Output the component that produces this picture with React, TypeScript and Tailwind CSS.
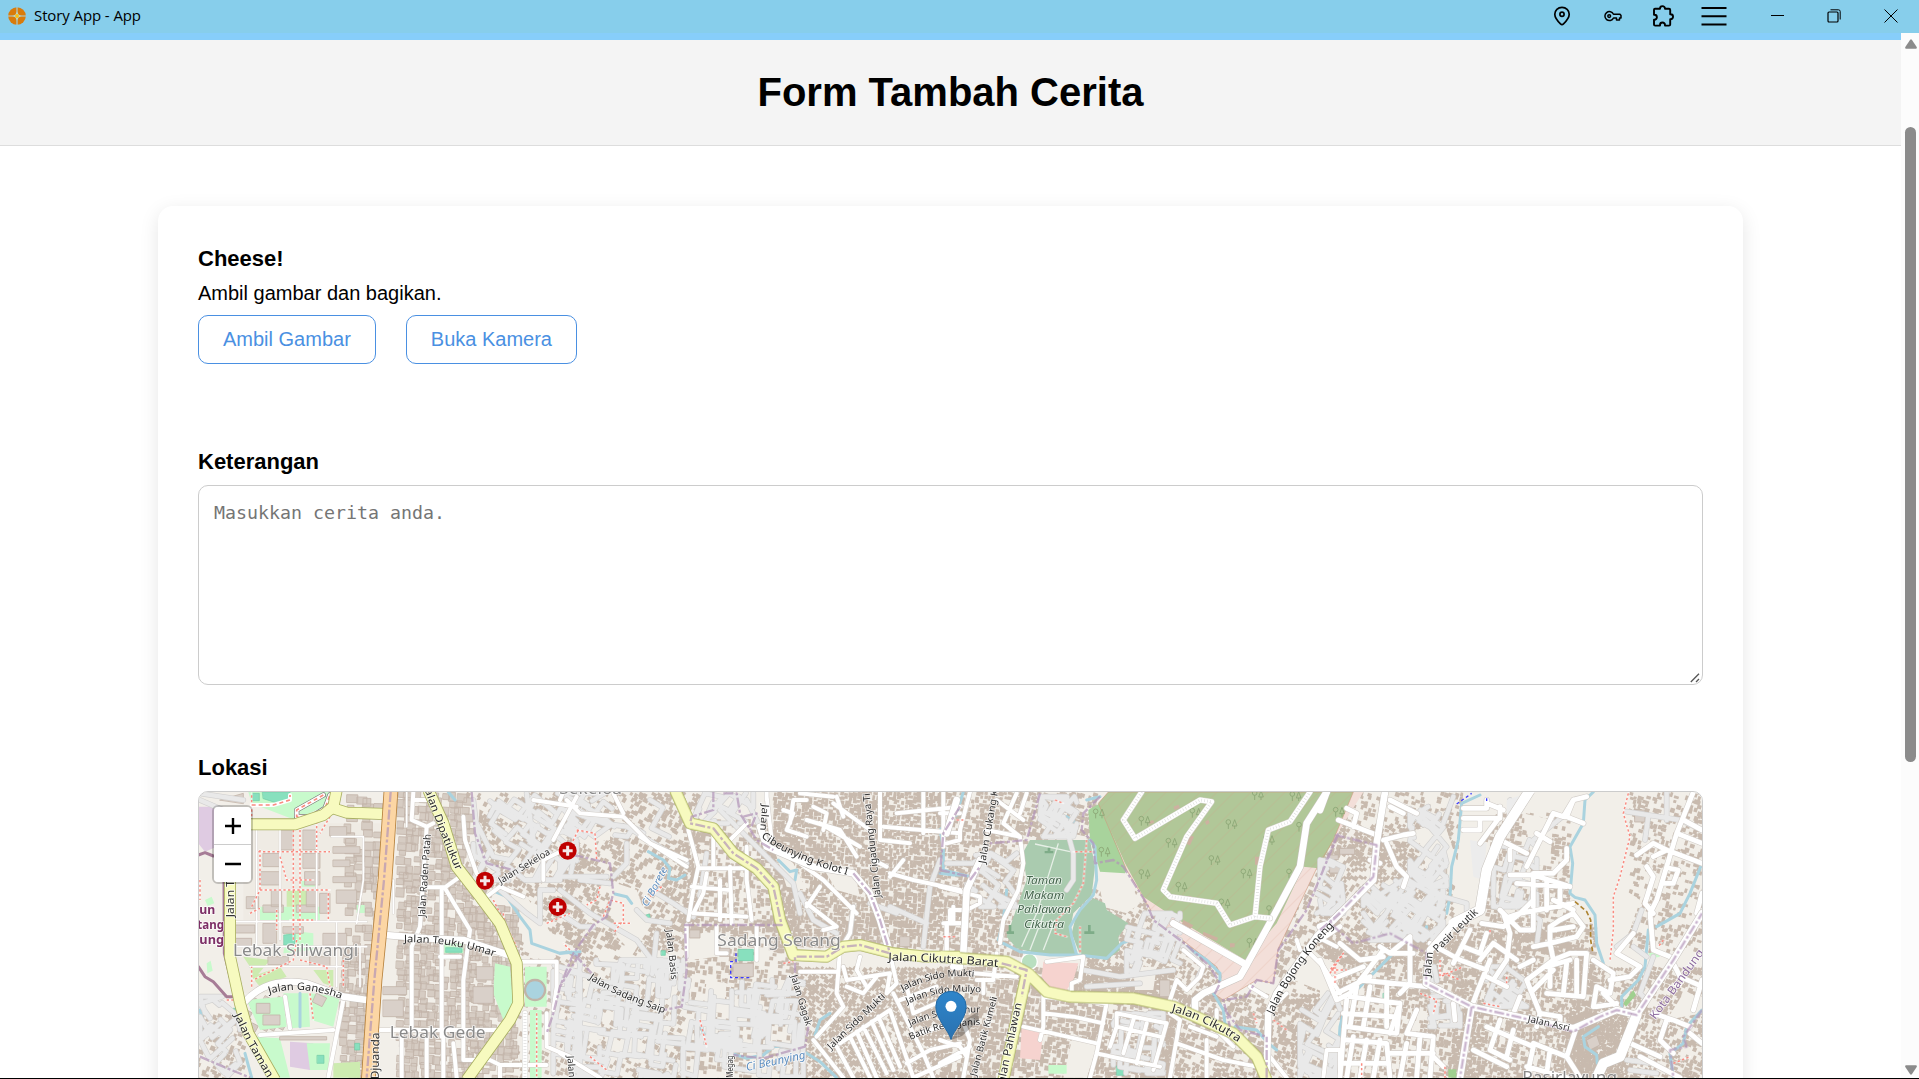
import React from "react";

const SANS = "font-['Liberation_Sans',Arial,sans-serif]";

/* ---------- map helpers ---------- */

type Seg = [number, string];

const ORIGIN = [180, 560, 940, 1320];

function rng(seed: number) {
  let s = seed;
  return () => {
    s = (s * 1664525 + 1013904223) % 4294967296;
    return s / 4294967296;
  };
}

const f1 = (n: number) => n.toFixed(1);

function houses(seed: number, x: number, y: number, w: number, h: number, step: number, density: number, angle: number) {
  const r = rng(seed);
  let d = "";
  const c = Math.cos(angle);
  const s = Math.sin(angle);
  for (let yy = y; yy < y + h; yy += step) {
    for (let xx = x; xx < x + w; xx += step) {
      if (r() > density) continue;
      const bw = step * (0.65 + r() * 0.6);
      const bh = step * (0.65 + r() * 0.6);
      const px = xx + (r() - 0.5) * step * 0.5;
      const py = yy + (r() - 0.5) * step * 0.5;
      d += `M${f1(px)} ${f1(py)}l${f1(bw * c)} ${f1(bw * s)}l${f1(-bh * s)} ${f1(bh * c)}l${f1(-bw * c)} ${f1(-bw * s)}z`;
    }
  }
  return d;
}

function alleys(seed: number, x: number, y: number, w: number, h: number, n: number, angle: number) {
  const r = rng(seed);
  let d = "";
  for (let i = 0; i < n; i++) {
    let px = x + r() * w;
    let py = y + r() * h;
    d += `M${f1(px)} ${f1(py)}`;
    let turn = r() > 0.5 ? 1 : 0;
    for (let k = 0; k < 3; k++) {
      const a = angle + turn * 1.5708 + (r() - 0.5) * 0.25;
      const len = (30 + r() * 70) * (r() > 0.4 ? 1 : -1);
      px = Math.min(x + w, Math.max(x, px + Math.cos(a) * len));
      py = Math.min(y + h, Math.max(y, py + Math.sin(a) * len));
      d += `L${f1(px)} ${f1(py)}`;
      turn = 1 - turn;
    }
  }
  return d;
}

function Layer({
  items,
  stroke = "none",
  width = 0,
  fill = "none",
  dash,
  cap = "round",
  opacity,
}: {
  items: Seg[];
  stroke?: string;
  width?: number;
  fill?: string;
  dash?: string;
  cap?: "round" | "butt";
  opacity?: number;
}) {
  return (
    <g fill={fill} stroke={stroke} strokeWidth={width} strokeDasharray={dash} strokeLinecap={cap} strokeLinejoin="round" opacity={opacity}>
      {items.map(([t, d], i) => (
        <path key={i} d={d} transform={`translate(${ORIGIN[t]} 780) scale(.33333)`} />
      ))}
    </g>
  );
}

/* ---------- map data ---------- */

const HOUSES: Seg[] = [
  [0, houses(3, 860, 36, 340, 420, 13, 0.5, 0.5)],
  [0, houses(4, 1000, 440, 160, 450, 12, 0.3, 0.4)],
  [0, houses(5, 55, 700, 140, 200, 12, 0.5, 0.4)],
  [1, houses(6, 20, 36, 400, 460, 13, 0.55, 0.5)],
  [1, houses(7, 370, 120, 330, 330, 13, 0.62, 0.1)],
  [1, houses(8, 640, 36, 500, 460, 12, 0.95, 0.15)],
  [1, houses(9, 20, 430, 360, 470, 12, 0.34, 0.5)],
  [1, houses(10, 380, 440, 330, 460, 13, 0.42, 0.1)],
  [1, houses(11, 700, 560, 460, 340, 12, 0.88, 0.6)],
  [2, houses(12, 0, 36, 250, 490, 12, 0.78, 0.2)],
  [2, houses(13, 230, 36, 240, 150, 12, 0.7, 0.3)],
  [2, houses(14, 0, 560, 700, 340, 13, 0.84, 0.15)],
  [2, houses(15, 420, 330, 420, 330, 12, 0.6, 0.5)],
  [2, houses(16, 640, 640, 500, 260, 13, 0.72, 0.4)],
  [2, houses(17, 1010, 160, 190, 500, 12, 0.5, 0.4)],
  [3, houses(18, 0, 130, 400, 420, 12, 0.66, 0.6)],
  [3, houses(19, 50, 36, 400, 200, 12, 0.38, 0.3)],
  [3, houses(20, 0, 480, 460, 420, 12, 0.66, 0.2)],
  [3, houses(21, 500, 100, 250, 420, 12, 0.62, 0.2)],
  [3, houses(22, 400, 430, 430, 470, 12, 0.8, 0.25)],
  [3, houses(23, 750, 560, 400, 340, 12, 0.72, 0.4)],
  [3, houses(24, 930, 36, 220, 480, 12, 0.45, 0.3)],
  [3, houses(25, 740, 700, 180, 190, 11, 0.98, 0.4)],
];

const BLOCKS: Seg[] = [
  [0, houses(1, 655, 36, 200, 860, 22, 0.92, 0.05)],
  [0, houses(2, 850, 380, 150, 520, 21, 0.9, 0.05)],
  [0, houses(51, 485, 500, 90, 400, 23, 0.85, 0.05)],
  [0, houses(52, 500, 50, 100, 450, 26, 0.75, 0.02)],
  [0, houses(53, 200, 650, 110, 100, 20, 0.6, 0.5)],
];

const OPEN: Seg[] = [
  [3, "M800 36H920L880 90L930 170L915 330L960 360L930 450L880 540L845 520L825 400L760 345L750 210L790 130Z"],
  [3, "M210 180L370 120L410 240L390 330L330 300L300 190Z"],
  [3, "M430 36H560L490 180L460 360L400 380L420 160Z"],
  [3, "M0 530L70 560L20 700L0 700ZM0 720L60 720V790H0Z"],
  [3, "M610 100L700 120L690 250L640 260Z"],
  [3, "M1090 640L1146 650V700L1040 720Z"],
  [2, "M470 270L560 285L600 370L560 400L490 380Z"],
  [2, "M580 560L650 560L640 630L585 630ZM1110 500L1180 560L1160 640L1060 600Z"],
  [2, "M400 760L470 800L440 893H370ZM350 150L440 170V180H350Z"],
  [1, "M640 200L700 250L740 330L680 320ZM780 250L880 260L900 350L830 330Z"],
  [1, "M20 120L150 150V180L60 190ZM140 300L230 330L270 440L220 520L170 470ZM20 700L120 710L130 780L30 770Z"],
  [1, "M370 460L470 460V530L390 540ZM440 600L500 610L490 700L430 690Z"],
  [0, "M850 60L900 60L890 240L850 200ZM930 340L1040 350L1120 470L1180 500L1100 540L1020 480Z"],
  [0, "M55 210L130 240V380L55 300ZM60 500L130 560L150 650L90 600Z"],
];

const BIG: Seg[] = [
  [0, "M300 150h40v60h-40zM370 150h40v60h-40zM250 220h50v40h-50zM370 220h50v45h-50zM240 275h60v40h-60zM375 275h45v40h-45zM450 140h50v28h-50zM460 200h80v20h-80zM460 290h70v18h-70zM275 330h30v50h-30zM380 330h30v50h-30zM420 340h30v60h-30zM200 350h36v36h-36zM250 375h60v22h-60zM350 375h60v22h-60zM165 435h60v24h-60zM165 475h50v24h-50zM250 430h40v60h-40zM430 460h70v36h-70zM310 440h60v20h-60zM470 330h60v40h-60zM460 240h50v20h-50zM265 530h60v24h-60zM390 530h60v30h-60zM410 640l30 14l-14 26l-28-14z"],
  [0, "M230 670h40v30h-40zM250 705h50v30h-50zM610 620h70v24h-70zM610 660h60v50h-60zM890 560h50v40h-50zM880 620h60v50h-60zM300 770h140v10h-140zM120 60l70-20v30z"],
  [2, "M660 600h30v50h-30zM950 560l30 -50l15 10l-30 50zM340 590h30v24h-30zM365 560h20v20h-20zM1170 250h30v30h-30z"],
  [3, "M800 780l30-15l10 30l-30 15zM30 255h40v24h-40zM60 205h44v18h-44zM25 225h30v14h-30zM945 90h30v36h-30zM340 245h40v40h-40z"],
  [1, "M480 505h30v24h-30zM1020 470h30v30h-30zM520 550h60v40h-60zM390 450h30v24h-30z"],
];

const PARK: Seg[] = [
  [0, "M205 36H455L430 80L345 120L215 70ZM310 640L385 640L390 740L330 745ZM200 660L310 650L320 740L240 750ZM390 640L480 650L460 740L395 720ZM320 450L400 460V510L310 520ZM240 380H420V420H240ZM1035 560L1100 560V680L1035 680ZM945 550L990 560L1000 680L970 720L940 640ZM230 770L300 775L330 893H290ZM1050 690H1085V893H1050ZM380 790L450 790L445 870L390 870ZM790 490L850 490V520H790ZM75 360l20-10l8 20l-20 8zM365 300h40v20h-40zM80 550l12-8l6 30l-16 8zM530 375l24 0v24h-24z"],
  [3, "M985 520L1010 515L1020 530L995 535Z"],
  [2, "M325 855h55v26h-55z"],
];

const GRASS: Seg[] = [
  [0, "M190 530L270 540L220 600L210 560ZM400 570L460 570V620L430 610ZM215 590L300 560L320 590L240 620ZM460 850L540 845V893H460ZM320 330h60v50h-60zM465 292h60v12h-60z"],
];

const PITCH: Seg[] = [
  [0, "M248 36H330V60L300 72L250 56ZM312 465l33-3v30l-33 3zM798 503h48v14h-48zM412 826h20v24h-20zM525 790h14v20h-14zM218 40h20v22h-20zM160 685h10v16h-10z"],
  [1, "M535 508h45v34h-45zM258 405l10-3l4 18l-10 3zM304 512h12v14h-12z"],
  [2, "M530 858h26v28h-26zM875 576l20-4v16l-20 4z"],
  [3, "M190 640h14v16h-14z"],
];

const WATER: Seg[] = [
  [1, "M265 215L310 240L330 265L325 295L350 300L375 285M165 342L200 350L215 370M0 520L30 515L50 525M655 240L690 275L710 270L705 300M415 710L430 760L450 780L470 765M515 820L560 835L610 825L640 800L700 795L740 820L780 845L830 893M810 700L780 720L765 765M1200 100L1180 110M1140 280L1180 285H1200"],
  [2, "M70 36L50 100L0 150L10 200V270L90 290M200 330L190 420L175 480M190 490L240 515L330 525L410 525L395 470L390 440L420 390L460 345L470 300L465 200L450 180M415 525L500 535L545 490L570 480M380 110L410 130M740 500L800 540L840 580V610L820 640L850 690L855 730L880 760M885 740L950 750L985 790L1010 810M1190 780V893M440 60L480 50"],
  [0, "M805 36L825 60M60 690L70 730L55 760M945 335L980 350L1020 410L1050 450L1055 490L1140 520L1200 515M195 820L215 893M360 640V740"],
  [3, "M480 45L425 70L415 180L395 260L390 350L380 400M320 440L310 470M250 490L210 530L140 600L80 660L60 740L50 893M820 36L795 60L790 130L750 200L758 250L750 340L765 352L795 360L825 405L830 490L850 550M1146 250L1110 340L1080 400L1010 440M985 450L975 560L955 600L905 650V690M835 740L790 770L795 800L830 825L832 850M1146 690L1100 740L1090 790L1050 820L1060 893"],
];

const ALLEYS: Seg[] = [
  [0, alleys(31, 880, 40, 310, 260, 20, 0.6) + alleys(32, 1120, 520, 80, 370, 16, 0.2) + alleys(33, 60, 650, 120, 240, 9, 0.8) + "M60 60L130 90M60 40L190 60"],
  [0, "M890 130L940 230L990 240M880 60L900 230M980 80L1100 160L1190 150M1040 40L1060 180L1150 250M960 330L1040 400L1080 430V330H1120M1040 300H1140V250"],
  [1, alleys(34, 20, 540, 350, 350, 44, 0.12) + alleys(35, 370, 600, 360, 290, 36, 0.1) + alleys(36, 20, 40, 320, 130, 10, 0.6) + alleys(37, 400, 40, 180, 90, 7, 2.1)],
  [1, "M20 90L130 130L200 140L380 250M0 330L90 400L230 480L290 560M60 300L150 310M200 190V250L160 290M230 390L260 420L330 430M0 400L60 440L100 440M0 290H140M480 90L560 170L700 310L720 400M560 60L620 180M290 340L340 370L400 410M290 460L280 560L320 640M440 220L420 350M990 380L1100 430M720 340L760 420L830 460M930 370L1010 400M880 380L870 460L840 510M1090 500L1110 320L1140 240"],
  [2, alleys(38, 300, 50, 110, 120, 9, 0.5) + alleys(39, 560, 400, 160, 180, 12, 0.3) + alleys(40, 1080, 640, 120, 250, 16, 0.5) + alleys(41, 520, 700, 150, 180, 12, 0.15) + alleys(44, 80, 220, 150, 160, 8, 0.6)],
  [2, "M430 570L540 590L700 570M440 620L600 610M370 110L400 220V300L380 330M20 250H100M730 500L790 560L770 600M1130 340L1180 370L1130 400"],
  [3, alleys(42, 130, 300, 240, 180, 26, 2.2) + alleys(43, 270, 80, 110, 240, 12, 0.6) + alleys(45, 500, 560, 120, 120, 8, 0.6) + alleys(46, 520, 180, 130, 200, 12, 0.3) + alleys(47, 0, 240, 70, 160, 8, 0.6) + alleys(48, 330, 560, 90, 180, 8, 1.5)],
  [3, "M920 95L1080 120L1146 150M1040 36V120M985 110L975 180M400 50L370 130M640 180L740 100M570 60L590 90M1000 530L960 640L980 660M965 390L940 460L890 500M940 500L980 530M370 350L440 370V400M630 400L660 420L650 500M920 840L1000 850M930 870L1010 880"],
];

const WHITE_THIN: Seg[] = [
  [0, "M455 170H550V300L530 430M160 425H560M160 500H560M230 140V500M300 140V480M410 150V420M470 430V620M210 560H490M540 500V620M640 400V300H610M680 36V140"],
];

const WHITE: Seg[] = [
  [0, "M700 36L695 120L740 140L760 130M740 140L720 440L695 500V740M785 330V770M795 325L870 450L850 600V840H930M735 322L795 322L840 290M850 110L855 180L890 280L920 320M1010 545H1130V620L1120 690M960 855H1100M1100 700V800L1170 830M600 750H960M665 760V893M740 770V893M790 770V893M820 790L830 893M930 840L960 855V893M240 765L460 750M490 660L445 893M315 650L330 745M840 530H780M700 60H740M1060 60L1190 80M1120 180L1190 50M1090 300V240L1170 200M920 350L960 320L1030 350"],
  [1, "M20 60L60 100L190 110L270 190L380 240M160 40L190 100M240 170L380 260M385 150L415 260L400 330L385 420M420 265H560M460 160V260M510 260L515 430M560 200V300L575 420M440 280L430 340L400 400L560 410M480 300V420M395 320L510 330M380 435V530M470 440V520H500M590 440V540M620 50L635 180M620 36V60M670 90L700 100L680 150L740 170M740 60L700 60L690 130M760 80L800 100L790 150M820 70L930 150M780 130L900 200M830 50L850 110M720 40L820 50M740 120L840 150L890 230M720 250L790 300L850 360L890 400M740 370L830 440L790 450M780 320L740 380M560 130L500 190M880 380L870 460L840 510L830 640L850 680L770 770M850 560L860 600L990 580L980 640M720 575H835M860 620L910 640L950 590M890 570L920 620M900 530L890 570M990 280L1060 300L1200 330M1030 240L990 290M960 30V180L1050 190M1010 100L1200 80M970 140L1200 160M1090 36V160M940 240L980 260M1150 36V200M1160 430V540M1150 430H1200M1180 380V430M990 520L1010 610L980 640M0 820L120 893M20 10L0 60"],
  [1, "M840 790L990 690L1060 893M870 770L930 893M890 755L950 893M910 740L980 880M935 725L1000 870M955 710L1020 860M830 800L880 893M760 780L850 893M1000 640L1090 820L1120 893M1040 850L1110 810L1200 790M1060 893L1200 830M1020 660L1130 620M1060 700L1150 660M1080 760L1200 720M1040 620L1060 700"],
  [2, "M90 36L60 150V180L20 190M170 60L250 120M230 40L190 130L240 170L250 250L235 330L190 420L180 490M140 150L240 170M260 40L240 100M0 320L80 340L120 350V370L80 390M70 390H30V430M70 430H20V520M170 520L160 600L110 600M0 100H60M100 580L230 590M130 600V640M310 620V740L300 780M310 650L500 670L470 820L450 893M310 700L400 710L490 730M250 740L470 790M470 820L560 840L660 860M710 600L690 660V700L720 720L690 893M710 600L740 630L780 590L790 560L730 510M430 530L420 600L395 610V640M320 545L430 530M530 700V740L510 800M530 700L680 730L640 870M580 720L550 820M620 730L590 850M530 740L660 770M710 790L850 840L950 860M750 740L830 770M830 690V750L880 800M0 780L60 800L80 830M60 700L90 780L70 893M0 850L90 800M930 620L980 650M1070 480L1080 510M1100 510L1150 560L1200 640M1150 480L1190 500M990 830L1040 893M1150 893L1160 810H1200V893M800 780V890M1000 680L1040 640"],
];

const WHITE_EAST: Seg[] = [
  [3, "M55 120L170 165M80 85L110 100L100 140M210 60L290 100M210 80L250 100M190 180L250 165L280 160M200 190L230 260L260 290L250 320M180 250L150 240M430 85H500V60M430 115H540V80M430 150H480V120M540 110L480 190M500 70L550 90M540 180L620 220M570 210V240M620 260L700 100L730 110L760 60L800 50M760 60L740 110L790 130M650 160L690 185M640 280L700 280L740 240V205M570 285H640L750 320M590 310L740 320M640 290V380M680 300V390M720 330V380M760 370L600 400L570 410M700 360L760 390M550 400L570 460L560 540L520 600M485 430L550 440L600 400L640 360M540 390L600 450L640 450V400M690 440L720 420L760 400L790 440L770 470L690 490ZM700 450L760 440M640 500L690 490L700 540L750 520L800 520L790 650L680 640M620 600L700 540M640 630L700 570M680 560L750 540M690 620V560M730 640L740 550M770 640V540M620 600L660 700L720 710M640 540L600 560M590 540L520 490L480 540M450 450L400 550M430 500L480 520L500 460M330 490L420 540L500 570M510 540L470 640L455 680M500 590L560 620"],
  [3, "M0 480L60 440M0 540L50 660L90 640L190 510M30 600L130 560M50 640L150 590M60 490L120 540L190 530M180 500L210 520L270 470M210 520H280M270 470V610L240 640M120 600L320 620M90 650L240 670L230 760L80 740M110 620L90 740M150 620L130 740M200 620V740M70 700L220 710M80 660L60 890M80 780L200 790L210 893M100 770L80 893M140 780L120 893M180 780L160 893M70 850H200M240 670L210 760M290 690L260 760L340 770L330 893M260 790L240 893M300 770L290 893M210 820H340M340 830L370 860M400 670L405 720M460 810L560 860M500 740L640 800L620 893M540 720L510 810L570 840M580 750L560 830M640 790L740 830M660 700L650 740M720 710V740M770 740L740 830L780 893M690 810L680 880M620 860L740 893M600 650L580 700M820 540L880 580L870 640L830 620L820 680M850 640L900 690M870 600L930 590L960 560L890 520L940 460M830 680L890 670"],
  [3, "M1120 36L1070 160L1010 360L990 400L1000 510L1050 530M1000 230L1040 210L1146 250M950 225L1000 190L1040 210M980 260L1000 290L975 370L1000 400M1050 265L1075 270L1060 310H1030M1090 120L1146 150M1070 160L1146 190M1146 340L1130 400M1050 530L1080 590L1146 620M1000 700L1060 720L1110 740M1040 720L1020 780L1060 820M930 790L1020 830M1110 760L1146 790M960 830L1080 893M1146 600L1120 690"],
];

const WHITE_WIDE: Seg[] = [
  [0, "M615 465L740 475L850 480L1000 530M190 670C250 600 330 600 380 610L490 650L560 660"],
  [1, "M600 140L620 200L760 260L880 280L930 340L960 420L990 520M1190 60L1160 160M1180 560H1200"],
  [2, "M120 240L80 330L70 520M920 555L900 590L790 640L765 660V690M700 430L920 555M1200 400L1130 470L1010 640L985 700L980 893M920 555L1000 410L1080 260L1100 130L1160 36"],
  [3, "M195 36L170 190L160 300L30 430L0 440M20 36L0 90M400 430L330 510L318 610L455 680L600 712L760 745M455 680L420 893M760 745L890 690L950 705L1060 540L1146 400"],
];

const WHITE_MAIN: Seg[] = [[3, "M630 30L540 170L500 270L480 390L400 430M950 705L900 830L850 850L830 893"]];

const DOTTED_WHITE: Seg[] = [
  [2, "M605 36L550 120L585 175L780 60L815 65L740 170L670 330L690 350L830 370L870 435L945 410L990 415M945 410L960 260L985 150L1050 125L1110 36"],
  [0, "M1035 700V893"],
];

const YELLOW: Seg[] = [
  [0, "M150 290L150 530L180 670L205 760L285 900M200 133H345L430 105L460 80L470 30M460 85L500 98L615 102"],
  [0, "M745 30L790 130L830 260L900 350L960 430L1010 550L1015 670L990 720L860 900"],
  [1, "M345 30L390 130L460 145L520 220L590 265L640 320L660 420L700 525L800 530L850 500L900 495L1000 520L1100 530L1200 530"],
  [2, "M0 530L200 545L265 580L320 635L390 650L580 655L700 680L880 760L950 830L980 900M258 590L190 900"],
];

const ORANGE: Seg[] = [[0, "M633 30L615 300L585 600L565 900"]];

const BOUNDARY: Seg[] = [
  [0, "M875 36L885 160L920 250L1000 270M1200 520L1140 620L1120 700L1100 760M60 830L130 860L210 893"],
  [0, "M632 36L612 300L583 600L560 893"],
  [1, "M460 36V90L395 110L390 130L460 145L520 220L590 265L640 320L665 435H375L380 570L365 680L310 690M490 40H530L540 100L590 180L640 210M40 225L150 250L160 340L140 410L100 435L40 520L0 620M45 525L95 580M550 110L590 100L570 150M880 280L930 340L960 420L990 520L900 495L850 500L800 530H705V610M745 740L735 800L610 835L520 825M1200 80L1150 160L1140 280"],
  [2, "M300 40L260 180L150 190M480 50L430 100L425 150L460 190L465 250L520 240L550 260L620 370L640 420L740 495L810 560L840 610L820 650M185 550L260 570L245 650M1195 160L1100 390L1015 510L1000 610L950 600L920 650L850 660L870 740M90 300L120 260M0 270L90 290M980 893V770M1140 450L1200 400M855 690L900 750L980 770"],
  [3, "M45 165L170 195L160 290L30 430L100 490L210 460L320 520L318 610L455 680L600 712L760 755L840 710L890 690L950 705L1060 540L1146 400M455 680L420 893M20 240L50 170M1146 690L1090 770L1100 800L1050 810L1060 893"],
];

const FOOT: Seg[] = [
  [0, "M340 150V480M360 150V480M235 215H450M215 380L240 330H450M300 230L320 300L400 300M290 390V450M350 480L340 540L220 600M360 540L440 560L450 620M490 540V620M210 400L240 385M445 340V420M410 110V210M450 110L420 160M240 210V330M215 620V560M390 640L400 720M1070 700V893M940 360L1010 500M970 400L980 480M400 420H330M60 300V360M330 120H215V40M140 660H180M1100 430L1170 400M1160 220L1195 150"],
  [1, "M50 150L105 160L110 240M120 320L110 360L80 375M130 410L150 360L190 370V420L160 460M210 430H160M420 720L440 800M305 320L270 350M30 510L10 490M90 830L140 870M670 550L700 545"],
  [2, "M455 215H400M440 180L430 310L400 370L350 420L345 460L380 470M345 60L370 70M10 470H50M50 120H70M420 440V520M1000 720L1040 750M940 700L950 730M1185 560V610"],
  [3, "M925 40L910 100L930 170L900 290L880 350V450L870 540M30 580L70 520L30 570L80 570M360 540V590L430 560M370 580L420 600M300 640L350 660L340 700M490 670L540 680M1030 480L1015 500M1060 850L1110 830M125 850V893M375 860V893M560 590V610M510 450V460"],
];

function Tree({ x, y }: { x: number; y: number }) {
  return (
    <g transform={`translate(${x} ${y})`} fill="none" stroke="#8ba675" strokeWidth="2.6">
      <circle cx="-8" cy="-6" r="7" />
      <path d="M-8 1V15M11 15V6M11 -13L4 6H18Z" />
    </g>
  );
}

interface LabelProps {
  t: number;
  x: number;
  y: number;
  r?: number;
  w: number;
  s?: number;
  c?: string;
  b?: boolean;
  i?: boolean;
  a?: "start" | "middle";
  children: string;
}

function Label({ t, x, y, r = 0, w, s = 31, c = "#333", b, i, a = "middle", children }: LabelProps) {
  return (
    <g transform={`translate(${ORIGIN[t]} 780) scale(.33333)`}>
      <text
        transform={`translate(${x} ${y}) rotate(${r})`}
        textAnchor={a}
        textLength={w}
        lengthAdjust="spacingAndGlyphs"
        fontSize={s}
        fontWeight={b ? 700 : 400}
        fontStyle={i ? "italic" : "normal"}
        fill={c}
        stroke="rgba(255,255,255,.75)"
        strokeWidth="5"
        strokeLinejoin="round"
        paintOrder="stroke"
      >
        {children}
      </text>
    </g>
  );
}

function CurvedLabel({ id, t, d, w, s = 31, children }: { id: string; t: number; d: string; w: number; s?: number; children: string }) {
  return (
    <g transform={`translate(${ORIGIN[t]} 780) scale(.33333)`}>
      <path id={id} d={d} fill="none" />
      <text fontSize={s} fill="#2b2b2b" stroke="rgba(255,255,255,.6)" strokeWidth="4" paintOrder="stroke" textLength={w} lengthAdjust="spacingAndGlyphs">
        <textPath href={`#${id}`}>{children}</textPath>
      </text>
    </g>
  );
}

function MapCanvas() {
  return (
    <svg viewBox="199 792 1503 287" className="block h-[287px] w-[1503px] font-['Noto_Sans',sans-serif]">
      <defs>
        <pattern id="hatch" width="36" height="36" patternUnits="userSpaceOnUse" patternTransform="rotate(45)">
          <path d="M0 0V36" stroke="#d99a86" strokeWidth="3" opacity=".55" />
        </pattern>
        <linearGradient id="pin" x1="0" y1="0" x2="0" y2="1">
          <stop offset="0" stopColor="#2e85cb" />
          <stop offset="1" stopColor="#2a72b0" />
        </linearGradient>
      </defs>
      <rect x="199" y="792" width="1503" height="287" fill="#f2efe9" />
      <Layer items={HOUSES} fill="#c8baae" />
      <Layer items={OPEN} fill="#f2efe9" />
      <Layer items={[[0, "M190 130H600V420H190ZM150 420H580V640H190Z"]]} fill="#efebe4" />
      <Layer items={BLOCKS} fill="#d6ccc3" stroke="#c3b5a9" width={2.5} />
      <Layer items={[[0, "M55 80H130L110 200L75 215L55 190ZM330 785L400 790L390 870L330 860Z"]]} fill="#dfcbe2" />
      <Layer items={PARK} fill="#c8facc" />
      <Layer items={GRASS} fill="#cdebb0" />
      <Layer items={PITCH} fill="#88e0be" stroke="#6fcaa6" width={2} />
      <Layer items={BIG} fill="#d9d0c9" stroke="#c3b5aa" width={2.5} />

      {/* cemetery and pink blocks */}
      <Layer
        items={[[2, "M270 180H450L465 260L455 345L400 400L390 450L410 525L310 525L230 505L200 470L235 370L260 300L248 220ZM460 355L495 370L500 390L565 430L535 470L540 510L500 540L420 525L395 460L410 400Z"]]}
        fill="#aacbaf"
      />
      <Layer items={[[2, "M310 545L415 550L400 600L380 630L330 625L305 590ZM245 745L310 755L300 840L240 835Z"]]} fill="#f6d3cf" />
      <g transform="translate(940 780) scale(.33333)">
        <path d="M505 36H1270L1180 180L1130 265L1015 505L1000 610L950 600L850 660L820 640L845 590L830 560L650 420L560 270L475 70Z" fill="#f3dfd9" />
        <path d="M445 90L480 70L560 270L555 280L480 275L470 240L450 180Z" fill="#a8d39c" />
        <path d="M505 36H1240L1180 180L1135 265L1090 260L1010 430L915 540L700 410L610 350L555 250L475 70Z" fill="#b1c798" />
        <path d="M505 36H1240L1180 180L1130 265L1015 505L1000 610L950 600L850 660L820 640L845 590L830 560L650 420L560 270L475 70Z" fill="url(#hatch)" stroke="#d09a80" strokeWidth="3" opacity=".6" />
        <path d="M700 80l16-6l4 10l-16 6zM625 125l14-5l4 8l-14 5zM750 165l12 5l-12 26l-10-4zM795 125l10-6l4 10l-10 6zM945 230h12v24h-12zM730 420l30 16l-8 10l-26-14zM790 455l44 18l-4 10l-42-18zM870 490h14v12h-14zM710 348h44v6h-44z" fill="#cdb1a0" />
        {[
          [475, 100], [612, 122], [693, 188], [765, 98], [873, 132], [952, 45], [822, 240], [918, 280], [723, 320],
          [612, 282], [852, 370], [936, 488], [492, 215], [1065, 48], [1085, 140], [1055, 280], [985, 180], [995, 390], [1195, 95],
        ].map(([x, y]) => (
          <Tree key={`${x}-${y}`} x={x} y={y} />
        ))}
        <path d="M285 192L390 215M355 190L290 400L245 500M320 380L270 510M345 420L310 510" stroke="#e6efe6" strokeWidth="4" fill="none" />
        <path d="M325 205v10h-9v3h22v-3h-9v-10zM446 437v19h-11v4h26v-4h-11v-19zM208 437v19h-6v4h18v-4h-8v-19z" fill="#7eac88" stroke="#7eac88" strokeWidth="4" />
        <circle cx="268" cy="545" r="24" fill="#b9dfc0" stroke="#fff" strokeWidth="4" />
      </g>

      <Layer items={WATER} stroke="#aad3df" width={9} />
      <Layer items={ALLEYS} stroke="#d2d1d0" width={17} />
      <Layer items={ALLEYS} stroke="#e9e9e9" width={13} />
      <Layer items={[[3, "M450 180L500 190L490 300L460 290ZM560 60L620 40L600 90L560 130Z"]]} fill="#ececec" />
      <Layer items={WHITE_THIN} stroke="#cfc9c4" width={7} />
      <Layer items={WHITE_THIN} stroke="#ffffff" width={5} />
      <Layer items={WHITE} stroke="#d2cdc8" width={15} />
      <Layer items={WHITE_EAST} stroke="#d2cdc8" width={18} />
      <Layer items={WHITE} stroke="#ffffff" width={12} />
      <Layer items={WHITE_EAST} stroke="#ffffff" width={14.5} />
      <Layer items={WHITE_WIDE} stroke="#c9c4bf" width={23} />
      <Layer items={WHITE_WIDE} stroke="#ffffff" width={20} />
      <Layer items={WHITE_MAIN} stroke="#c9c4bf" width={33} cap="butt" />
      <Layer items={WHITE_MAIN} stroke="#ffffff" width={30} />
      <Layer items={DOTTED_WHITE} stroke="#d5d3cd" width={18} />
      <Layer items={DOTTED_WHITE} stroke="#ffffff" width={15} />
      <Layer items={DOTTED_WHITE} stroke="#dedede" width={9} dash="2 7" cap="butt" />
      <Layer items={FOOT} stroke="#fff" width={6} opacity={0.6} />
      <Layer items={FOOT} stroke="#f98b80" width={4.5} dash="7 7" cap="butt" />
      <Layer items={[[0, "M430 45L350 90L350 110L395 110L435 85L450 45"]]} stroke="#777" width={16} />
      <Layer items={[[0, "M430 45L350 90L350 110L395 110L435 85L450 45M215 75L280 75L330 60V45"]]} stroke="#fff" width={12} />
      <Layer items={[[0, "M430 45L350 90L350 110L395 110L435 85L450 45M215 75L280 75L330 60V45"]]} stroke="#f98b80" width={5} dash="12 9" cap="butt" />
      <Layer items={[[0, "M132 300L133 520L165 650L140 650L100 605L75 590L55 560M55 225L75 218L100 228"]]} stroke="#a67c96" width={9} />
      <Layer items={YELLOW} stroke="#a9af62" width={36} cap="butt" />
      <Layer items={YELLOW} stroke="#f7fabf" width={31} cap="butt" />
      <Layer items={ORANGE} stroke="#b5803c" width={44} cap="butt" />
      <Layer items={ORANGE} stroke="#fcd6a4" width={39} cap="butt" />
      <Layer items={BOUNDARY} stroke="#b294b8" width={7} dash="30 7 9 7" cap="butt" opacity={0.7} />
      <Layer items={[[3, "M765 365L800 395L812 420V480L818 515"]]} stroke="#ad8330" width={5} dash="14 8" cap="butt" />
      <Layer items={[[1, "M528 520V545H512V593H575"], [3, "M410 72L455 40M500 55v8"]]} stroke="#3a3aff" width={4} dash="9 8" cap="butt" />
      <Layer items={[[0, "M1065 600a30 30 0 1 0 .1 0z"]]} fill="#aad3df" stroke="#c0b4a8" width={7} />
      <Layer items={[[3, "M910 670L940 630L948 645L918 680Z"], [3, "M385 868h24v25h-24z"]]} fill="#a0d08f" />

      {/* labels */}
      <Label t={0} x={347} y={529} w={376} s={47} c="#8a8a8a">Lebak Siliwangi</Label>
      <Label t={0} x={773} y={773} w={288} s={47} c="#8a8a8a">Lebak Gede</Label>
      <Label t={1} x={657} y={499} w={370} s={47} c="#8a8a8a">Sadang Serang</Label>
      <Label t={1} x={92} y={42} w={188} s={47} c="#8a8a8a">Sekeloa</Label>
      <Label t={3} x={749} y={909} w={284} s={47} c="#8a8a8a">Pasirlayung</Label>
      <Label t={0} x={58} y={401} w={48} s={36} c="#7d2f66" b a="start">un</Label>
      <Label t={0} x={52} y={446} w={80} s={36} c="#7d2f66" b a="start">tang</Label>
      <Label t={0} x={58} y={491} w={74} s={36} c="#7d2f66" b a="start">ung</Label>
      <CurvedLabel id="ganesha" t={0} d="M268 642C330 622 400 625 500 662" w={220}>Jalan Ganesha</CurvedLabel>
      <CurvedLabel id="teuku" t={0} d="M672 487C760 486 850 496 960 536" w={276}>Jalan Teuku Umar</CurvedLabel>
      <CurvedLabel id="dipati" t={0} d="M734 30Q790 190 850 320" w={260} s={32}>alan Dipatiukur</CurvedLabel>
      <CurvedLabel id="taman" t={0} d="M162 705L205 795L262 893L290 940" w={215} s={32}>Jalan Taman</CurvedLabel>
      <Label t={0} x={162} y={412} r={-90} w={112} s={32} a="start">Jalan T</Label>
      <Label t={0} x={735} y={412} r={-86} w={250} s={30} a="start">Jalan Raden Patah</Label>
      <Label t={0} x={596} y={898} r={-89} w={140} s={34} a="start">Djuanda</Label>
      <Label t={0} x={962} y={312} r={-31} w={176} s={29} a="start">Jalan Sekeloa</Label>
      <Label t={1} x={22} y={828} r={86} w={90} s={29} a="start">Jalan K</Label>
      <Label t={1} x={318} y={450} r={84} w={150} s={29} a="start">Jalan Basis</Label>
      <CurvedLabel id="saip" t={1} d="M86 596C150 640 230 670 330 706" w={250} s={29}>Jalan Sadang Saip</CurvedLabel>
      <Label t={1} x={262} y={382} r={-62} w={130} s={30} c="#5d8ec0" i a="start">Ci Borete</Label>
      <Label t={1} x={560} y={873} r={-12} w={182} s={34} c="#5d8ec0" i a="start">Ci Beunying</Label>
      <Label t={1} x={607} y={72} r={95} w={80} s={30} a="start">Jalan</Label>
      <CurvedLabel id="cibeu" t={1} d="M603 172Q700 245 890 292" w={284} s={31}>Cibeunying Kolot I</CurvedLabel>
      <Label t={1} x={962} y={352} r={-96} w={315} s={30} a="start">Jalan Cigadung Raya Ti</Label>
      <Label t={1} x={692} y={588} r={73} w={158} s={29} a="start">Jalan Gagak</Label>
      <Label t={1} x={518} y={893} r={-90} w={66} s={28} a="start">Megag</Label>
      <Label t={1} x={813} y={810} r={-44} w={228} s={29} a="start">Jalan Sido Mukti</Label>
      <CurvedLabel id="barat" t={1} d="M985 542L1100 545L1220 552L1330 562" w={330} s={34}>Jalan Cikutra Barat</CurvedLabel>
      <CurvedLabel id="mukti2" t={1} d="M1028 634Q1140 575 1260 592" w={222} s={28}>Jalan Sido Mukti</CurvedLabel>
      <CurvedLabel id="mulyo" t={1} d="M1042 672Q1150 622 1280 640" w={226} s={28}>Jalan Sido Mulyo</CurvedLabel>
      <CurvedLabel id="luhur" t={1} d="M1050 738Q1150 692 1280 698" w={216} s={28}>Jalan Sido Luhur</CurvedLabel>
      <CurvedLabel id="rengganis" t={1} d="M1052 780Q1150 732 1290 735" w={215} s={28}>Batik Rengganis</CurvedLabel>
      <Label t={2} x={108} y={890} r={-75} w={246} s={28} a="start">Jalan Batik Kumeli</Label>
      <Label t={2} x={192} y={920} r={-78} w={255} s={33} a="start">Jalan Pahlawan</Label>
      <Label t={2} x={136} y={252} r={-80} w={225} s={30} a="start">Jalan Cukang K</Label>
      <Label t={2} x={312} y={311} w={108} s={34} c="#44654c" i>Taman</Label>
      <Label t={2} x={312} y={356} w={122} s={34} c="#44654c" i>Makam</Label>
      <Label t={2} x={312} y={400} w={162} s={34} c="#44654c" i>Pahlawan</Label>
      <Label t={2} x={312} y={445} w={120} s={34} c="#44654c" i>Cikutra</Label>
      <CurvedLabel id="cikutra" t={2} d="M694 694Q800 722 915 800" w={222} s={34}>Jalan Cikutra</CurvedLabel>
      <CurvedLabel id="bojong" t={2} d="M998 704Q1070 550 1190 430" w={325} s={32}>Jalan Bojong Koneng</CurvedLabel>
      <Label t={3} x={331} y={592} r={-84} w={76} s={32} a="start">Jalan</Label>
      <Label t={3} x={352} y={518} r={-44} w={172} s={32} a="start">Pasir Leutik</Label>
      <Label t={3} x={622} y={725} r={13} w={128} s={29} a="start">Jalan Asri</Label>
      <Label t={3} x={1006} y={720} r={-54} w={250} s={34} c="#8d6c9f" a="start">Kota Bandung</Label>

      {/* clinics */}
      {[
        [915, 302],
        [1163, 212],
        [1133, 381],
      ].map(([x, y]) => (
        <g key={x} transform={`translate(${180 + x / 3} ${780 + y / 3})`}>
          <circle r="9" fill="#bf0000" />
          <path d="M-5 0H5M0 -5V5" stroke="#f4e9e9" strokeWidth="3" />
        </g>
      ))}

      {/* marker */}
      <path d="M951 1040L964 1020L978 1012L979 1020L962 1036Z" fill="#000" opacity=".25" />
      <path
        d="M951 1039.5C948.500 1030 935.800 1019 935.800 1006.500A15.200 15.200 0 0 1 966.200 1006.500C966.200 1019 953.500 1030 951 1039.500Z"
        fill="url(#pin)"
        stroke="#2268a3"
        strokeWidth="1"
      />
      <circle cx="951" cy="1006.300" r="5.500" fill="#fff" />
    </svg>
  );
}

/* ---------- window chrome ---------- */

function AppLogo() {
  return (
    <svg viewBox="0 0 18 18" className="size-[18px]">
      <circle cx="9" cy="9" r="8.800" fill="#d97b0b" />
      <path d="M9 0V18M0 9H18" stroke="#a9d3dd" strokeWidth="1.100" />
      <path d="M9 6Q9.800 8.200 12 9Q9.800 9.800 9 12Q8.200 9.800 6 9Q8.200 8.200 9 6Z" fill="#b7d8c8" stroke="#b7d8c8" strokeWidth="1.200" />
      <circle cx="9" cy="9" r="1.900" fill="#fbbf12" />
    </svg>
  );
}

function TitleBar() {
  return (
    <div className="flex h-[33px] shrink-0 bg-[#87ceeb] pb-px text-black">
      <div className="flex items-center gap-[8px] pl-2">
        <AppLogo />
        <span className="mt-[-3px] font-['Open_Sans','Noto_Sans',sans-serif] text-[15px] leading-5 tracking-[-0.1px] whitespace-pre">Story App - App</span>
      </div>
      <div className="ml-auto flex">
        <div className="mr-[10px] flex">
          <div className="flex w-[50.500px] items-center justify-center">
            <svg viewBox="0 0 18 20" className="h-5 w-[18px]" fill="none" stroke="currentColor" strokeWidth="1.700">
              <path d="M9 1.300C4.900 1.300 1.800 4.300 1.800 8.200C1.800 11.800 4.500 14.900 7.500 17.900Q9 19.300 10.500 17.900C13.500 14.900 16.200 11.800 16.200 8.200C16.200 4.300 13.100 1.300 9 1.300Z" />
              <circle cx="9" cy="8.300" r="2.100" />
            </svg>
          </div>
          <div className="flex w-[50.500px] items-center justify-center">
            <svg viewBox="0 0 18 12" className="h-3 w-[18px]" fill="none" stroke="currentColor" strokeWidth="1.500">
              <path d="M9.500 4.200H16L17 5.500V8H15.500V10H12.500V8H9.500A4.500 4.500 0 1 1 9.500 4.200Z" strokeLinejoin="round" />
              <circle cx="5.200" cy="6.100" r="1.400" />
            </svg>
          </div>
          <div className="flex w-[50.500px] items-center justify-center">
            <svg viewBox="0 0 22 22" className="size-[22px]" fill="none" stroke="currentColor" strokeWidth="1.900" strokeLinejoin="round">
              <path d="M2 4.800Q2 3.800 3 3.800H8V3.600A2.500 2.500 0 0 1 13 3.600V3.800H17Q18.200 3.800 18.200 5V9.300H18.600A2.400 2.400 0 0 1 18.600 14.200H18.200V19.400Q18.200 20.600 17 20.600H13V20A2.500 2.500 0 0 0 8 20V20.600H3.200Q2 20.600 2 19.400V14.700H2.400A2.500 2.500 0 0 0 2.400 9.700H2Z" />
            </svg>
          </div>
          <div className="flex w-[50.500px] items-center justify-center">
            <svg viewBox="0 0 26 20" className="h-5 w-[26px]" fill="none" stroke="currentColor" strokeWidth="2">
              <path d="M.5 2H25.500M.5 10.300H25.500M.5 18.500H25.500" />
            </svg>
          </div>
        </div>
        <div className="flex w-[57px] items-center justify-center">
          <div className="mt-[-2px] h-px w-[13px] bg-black" />
        </div>
        <div className="flex w-[56px] items-center justify-center">
          <svg viewBox="0 0 14 14" className="size-3.5" fill="none" stroke="currentColor">
            <rect x="1" y="3" width="10" height="10" rx="1" strokeWidth="1.200" />
            <path d="M3.500 .8H11.500Q13.200 .8 13.200 2.500V10.500" strokeWidth="1" />
          </svg>
        </div>
        <div className="flex w-[57px] items-center justify-center">
          <svg viewBox="0 0 14 14" className="size-3.5" fill="none" stroke="currentColor" strokeWidth="1">
            <path d="M.5 .5L13.500 13.500M13.500 .5L.5 13.500" />
          </svg>
        </div>
      </div>
    </div>
  );
}

function Scrollbar() {
  return (
    <div className="flex w-[18px] shrink-0 flex-col items-center bg-[#fcfcfc] pt-[6px] pl-px">
      <svg viewBox="0 0 12 10" className="h-2.5 w-3" fill="#8b8b8b">
        <path d="M5 .9Q6 -.4 7 .9L11.700 8Q12.300 9.700 10.800 9.700H1.200Q-.3 9.700 .3 8Z" />
      </svg>
      <div className="mt-[78px] h-[635px] w-[11px] rounded-full bg-[#8b8b8b]" />
      <svg viewBox="0 0 12 10" className="mt-auto mb-[3px] h-2.5 w-3" fill="#8b8b8b">
        <path d="M5 9.100Q6 10.400 7 9.100L11.700 2Q12.300 .3 10.800 .3H1.200Q-.3 .3 .3 2Z" />
      </svg>
    </div>
  );
}

/* ---------- form ---------- */

function Heading({ children }: { children: string }) {
  return <h2 className="text-[22px] leading-[25px] font-bold">{children}</h2>;
}

function OutlineButton({ children }: { children: string }) {
  return (
    <button className="h-[49px] rounded-[10px] border border-[#4a90e2] bg-white px-6 text-[20px] leading-[23px] text-[#4a90e2]">{children}</button>
  );
}

function MapBox() {
  return (
    <div className="relative mt-[11px] h-[500px] overflow-hidden rounded-[10px] border border-[#ccc]">
      <MapCanvas />
      <div className="absolute top-[13px] left-[13px] w-[41px] overflow-hidden rounded-[6px] border-2 border-black/20 bg-clip-padding">
        <button className="flex h-[38px] w-full items-center justify-center border-b border-[#ccc] bg-white">
          <svg viewBox="0 0 16 16" className="size-4">
            <path d="M0 8H16M8 0V16" stroke="#000" strokeWidth="2.400" />
          </svg>
        </button>
        <button className="flex h-[37px] w-full items-center justify-center bg-white">
          <svg viewBox="0 0 16 16" className="size-4">
            <path d="M0 8H16" stroke="#000" strokeWidth="2.400" />
          </svg>
        </button>
      </div>
    </div>
  );
}

export default function App() {
  return (
    <div className={`flex h-[1079px] w-[1919px] flex-col overflow-hidden border-b border-black bg-white text-black ${SANS}`}>
      <TitleBar />
      <div className="flex min-h-0 flex-1">
        <div className="flex min-w-0 flex-1 flex-col overflow-hidden">
          <div className="h-[7px] shrink-0 bg-[#87cefa]" />
          <header className="flex h-[106px] shrink-0 items-center justify-center border-b border-[#ddd] bg-[#f4f4f4] pb-[2px]">
            <h1 className="text-[40px] leading-[46px] font-bold">Form Tambah Cerita</h1>
          </header>
          <main className="mx-[158px] mt-[60px] h-[1200px] shrink-0 rounded-[15px] bg-white px-10 pt-10 shadow-[0_5px_19px_rgba(0,0,0,0.1)]">
            <section>
              <Heading>Cheese!</Heading>
              <p className="mt-[11px] text-[20px] leading-[23px]">Ambil gambar dan bagikan.</p>
              <div className="mt-[10px] flex gap-[30px]">
                <OutlineButton>Ambil Gambar</OutlineButton>
                <OutlineButton>Buka Kamera</OutlineButton>
              </div>
            </section>
            <section className="mt-[85px]">
              <Heading>Keterangan</Heading>
              <div className="relative mt-[11px]">
                <textarea
                  placeholder="Masukkan cerita anda."
                  className="block h-[200px] w-full resize-none rounded-[10px] border border-[#ccc] px-[15px] py-[15px] font-['DejaVu_Sans_Mono',monospace] text-[18.270px] leading-6 placeholder:text-[#757575]"
                />
                <svg viewBox="0 0 10 10" className="absolute right-[3px] bottom-[2px] size-2.5" stroke="#555" strokeWidth="1.300">
                  <path d="M.8 9L9 .8M6 9L9 6" />
                </svg>
              </div>
            </section>
            <section className="mt-[70px]">
              <Heading>Lokasi</Heading>
              <MapBox />
            </section>
          </main>
        </div>
        <Scrollbar />
      </div>
    </div>
  );
}
